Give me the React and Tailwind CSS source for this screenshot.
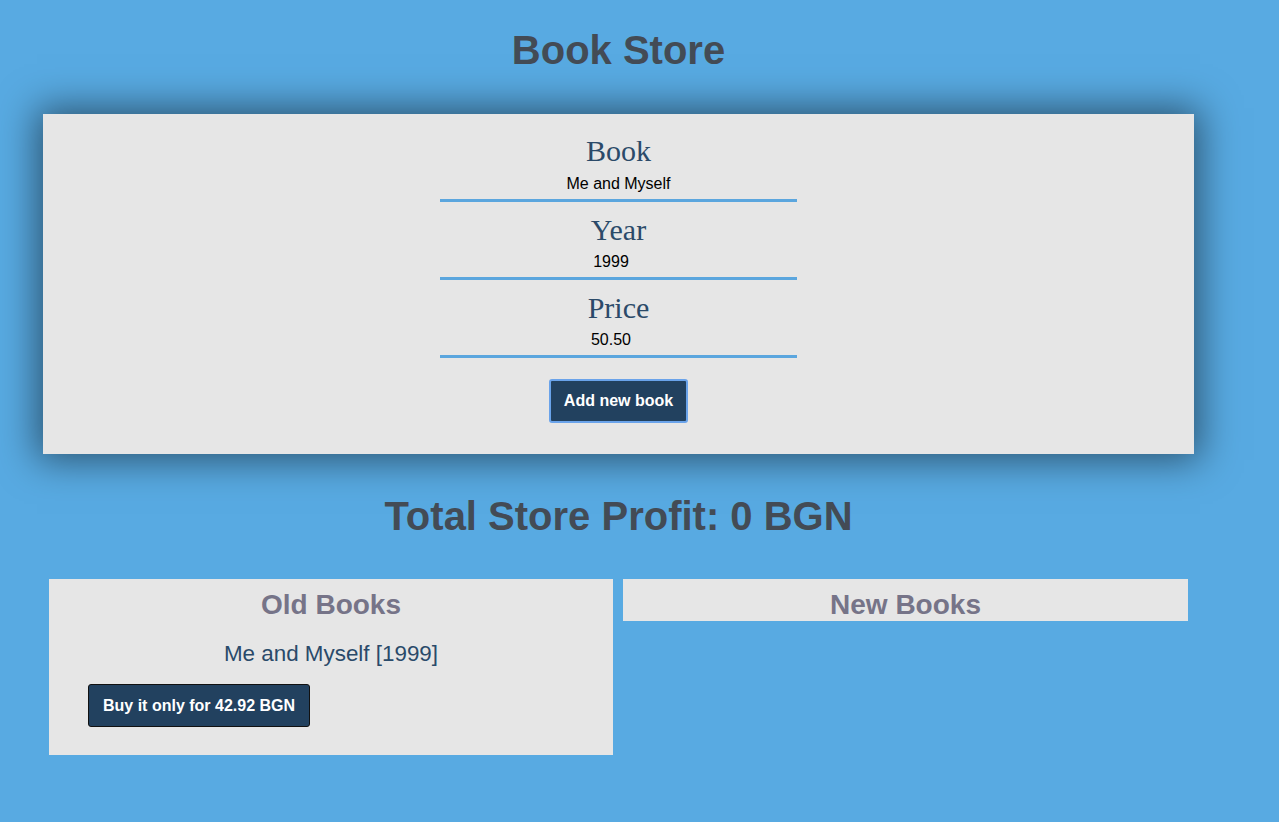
import React from 'react';

const fields = [
  { label: 'Book', value: 'Me and Myself', type: 'text' },
  { label: 'Year', value: '1999', type: 'number' },
  { label: 'Price', value: '50.50', type: 'number' },
];

export default function App() {
  return (
    <div className="min-h-screen bg-[#58aae2] font-['Liberation_Sans',Arial,sans-serif]">
      <div className="w-[1237px] pt-[27px] pb-[60px]">
        {/* Header */}
        <h1 className="text-center text-[40px] leading-[46px] font-bold text-[#434b55]">Book Store</h1>

        {/* Form */}
        <div className="ml-[43px] mt-[41px] w-[1151px] bg-[#e6e6e6] pt-[20px] pb-[31px] shadow-[0_0_36px_6px_rgba(0,0,0,0.5)] flex flex-col items-center">
          {fields.map((f, i) => (
            <div key={f.label} className={`flex flex-col items-center w-[357px] ${i > 0 ? 'mt-[11px]' : ''}`}>
              <label className="font-['Liberation_Serif','Times_New_Roman',serif] text-[30px] leading-[34px] text-[#2b4a69]">
                {f.label}
              </label>
              <input
                type={f.type}
                defaultValue={f.value}
                className={`w-[357px] bg-transparent text-center text-[16px] text-black border-b-[3px] border-[#5ba6de] outline-none ${i === 0 ? 'h-[34px]' : 'h-[33px]'}`}
              />
            </div>
          ))}
          <button className="mt-[21px] h-[44px] px-[13px] rounded-[3px] bg-[#22415f] border-2 border-[#6aa3ea] text-white text-[16px] font-bold">
            Add new book
          </button>
        </div>

        {/* Profit */}
        <h1 className="mt-[39px] text-center text-[40px] leading-[46px] font-bold text-[#434b55]">
          Total Store Profit: 0 BGN
        </h1>

        {/* Lists */}
        <div className="mt-[40px] ml-[49px] flex items-start gap-[10px]">
          <div className="w-[564px] bg-[#e6e6e6] pt-[10px] pb-[28px]">
            <h2 className="text-center text-[28px] leading-[32px] font-bold text-[#767488]">Old Books</h2>
            <p className="mt-[20px] text-center text-[22.4px] leading-[25px] text-[#2a4a6a]">Me and Myself [1999]</p>
            <button className="ml-[39px] mt-[18px] h-[43px] px-[14px] rounded-[3px] bg-[#22415f] border border-[#111] text-white text-[16px] font-bold">
              Buy it only for 42.92 BGN
            </button>
          </div>
          <div className="w-[565px] bg-[#e6e6e6] pt-[10px]">
            <h2 className="text-center text-[28px] leading-[32px] font-bold text-[#767488]">New Books</h2>
          </div>
        </div>
      </div>
    </div>
  );
}
